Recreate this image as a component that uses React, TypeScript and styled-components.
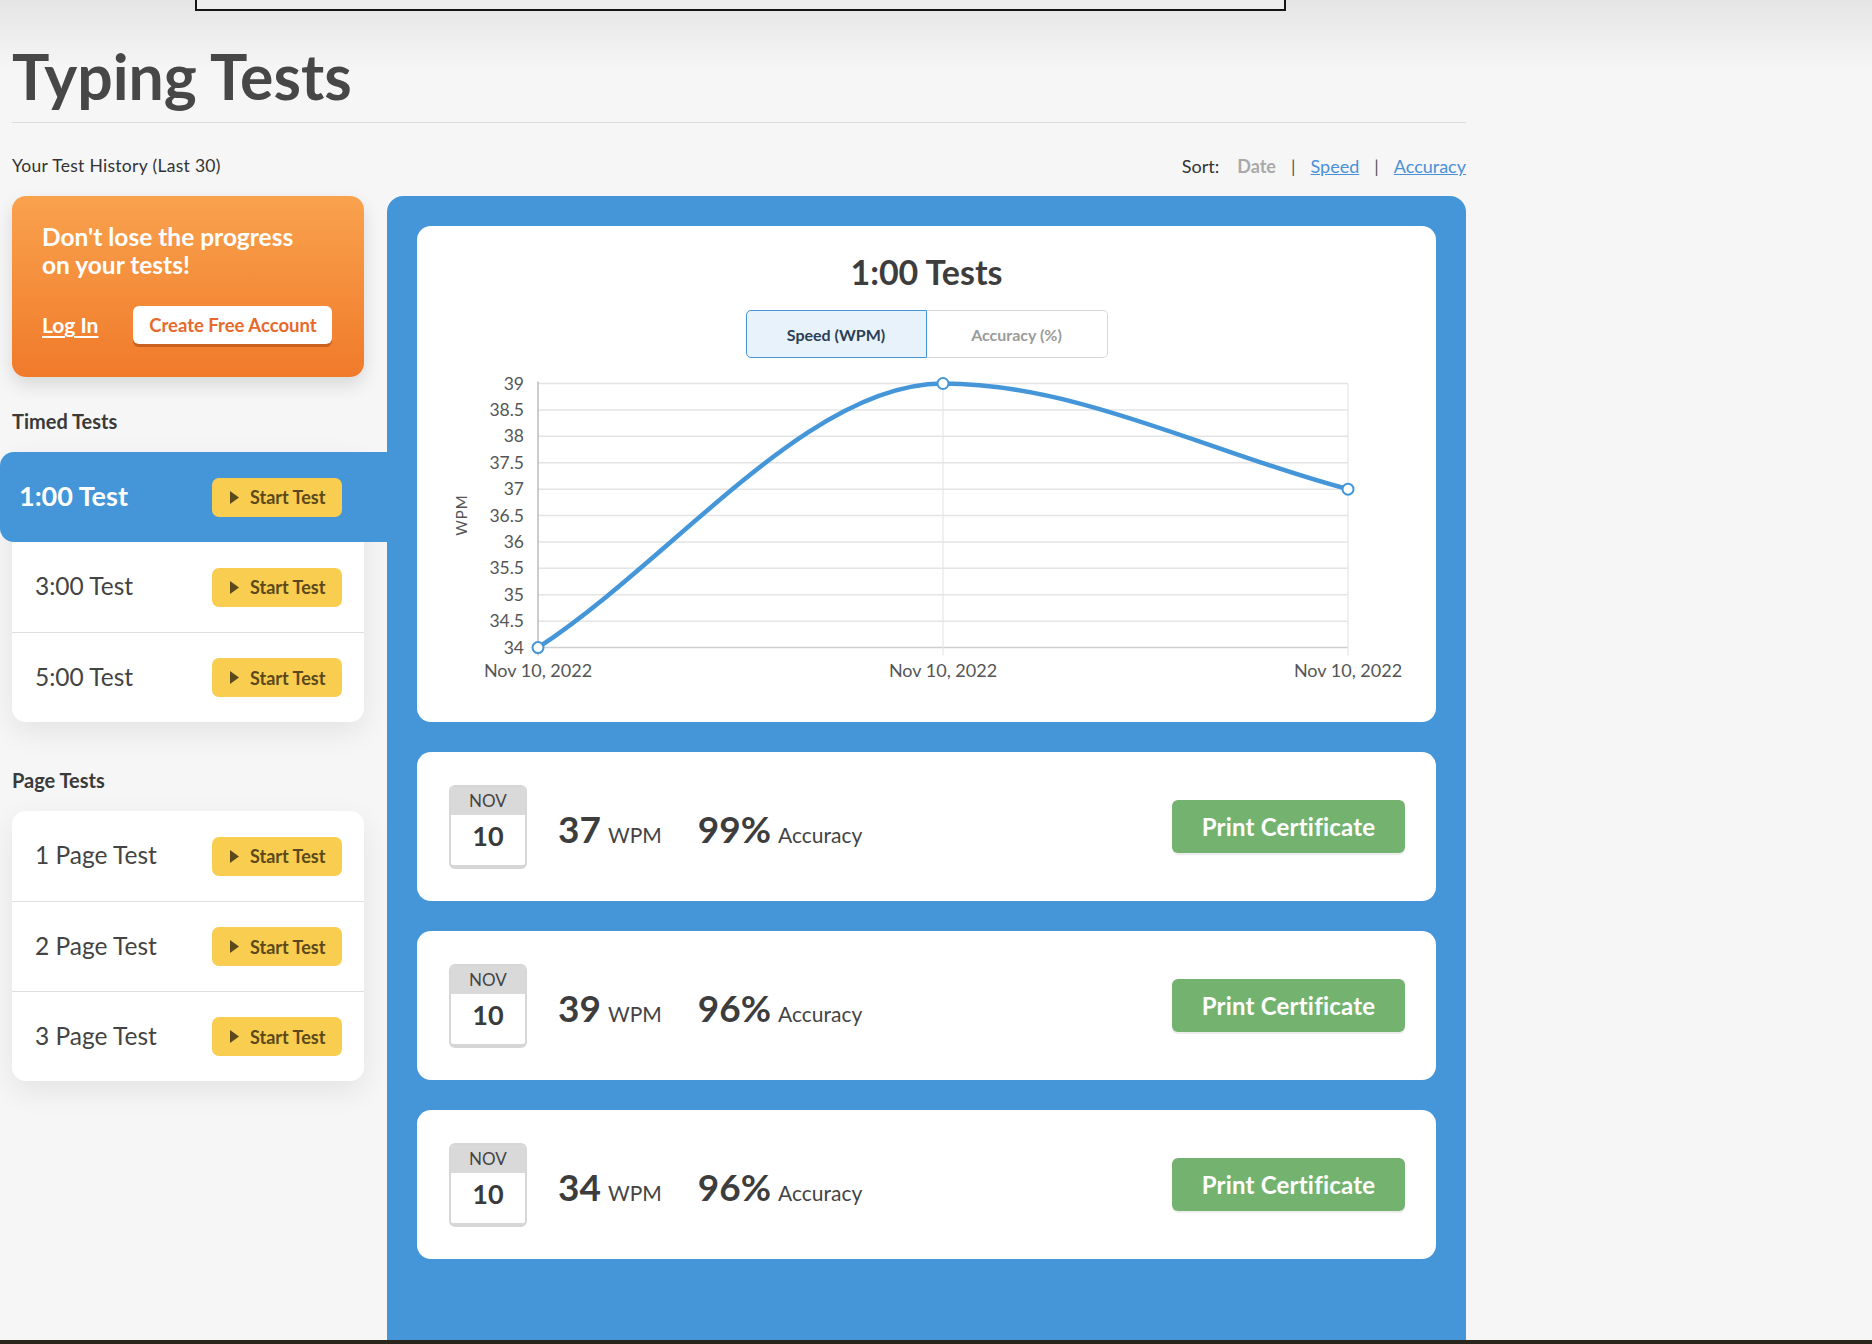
import React from "react";
import styled, { createGlobalStyle } from "styled-components";

const GlobalStyle = createGlobalStyle`
  html, body { margin: 0; padding: 0; overflow: hidden; }
  body {
    background: #f6f6f6 linear-gradient(#e5e5e5 0px, #f6f6f6 70px) no-repeat;
    font-family: Lato, "Open Sans", sans-serif;
    color: #444;
  }
  * { box-sizing: border-box; }
`;

const Page = styled.div`
  width: 1872px;
  height: 1344px;
  display: flex;
  flex-direction: column;
`;

const TopFrame = styled.div`
  margin-left: 195px;
  width: 1091px;
  height: 11px;
  border: 2px solid #151515;
  border-top: none;
  background: #eeeeee;
  flex: none;
`;

const Main = styled.main`
  width: 1466px;
  padding-left: 12px;
  flex: 1;
`;

const Title = styled.h1`
  margin: 29px 0 0;
  font: 700 62.5px/72px Lato, sans-serif;
  color: #474747;
  padding-bottom: 10px;
  border-bottom: 1px solid #dcdcdc;
`;

const SubHeader = styled.div`
  margin-top: 33px;
  height: 20px;
  display: flex;
  justify-content: space-between;
  align-items: center;
  font: 400 17.5px/20px Lato, sans-serif;
  letter-spacing: 0.3px;
  color: #333;
`;

const Sort = styled.div`
  display: flex;
  align-items: center;
  font-size: 18px;
  letter-spacing: 0;
  color: #333;
`;

const SortItem = styled.span<{ $link?: boolean; $muted?: boolean }>`
  margin-left: ${(p) => (p.$muted ? "18px" : "0")};
  color: ${(p) => (p.$link ? "#4a90d9" : p.$muted ? "#a9a9a9" : "#333")};
  text-decoration: ${(p) => (p.$link ? "underline" : "none")};
  font-weight: ${(p) => (p.$muted ? 700 : 400)};
`;

const Pipe = styled.span`
  margin: 0 15px;
  color: #555;
`;

const Content = styled.div`
  margin-top: 20px;
  display: grid;
  grid-template-columns: 352px 1079px;
  column-gap: 23px;
  align-items: start;
`;

const LeftCol = styled.aside`
  display: flex;
  flex-direction: column;
`;

const Promo = styled.div`
  height: 181px;
  border-radius: 14px;
  background: linear-gradient(#f9a24e, #f07a2a);
  box-shadow: 0 8px 18px rgba(0, 0, 0, 0.12);
  padding: 27px 30px 0;
  color: #fff;
`;

const PromoTitle = styled.div`
  font: 700 24.5px/28px Lato, sans-serif;
`;

const PromoActions = styled.div`
  margin-top: 27px;
  display: flex;
  align-items: center;
  gap: 35px;
`;

const LoginLink = styled.a`
  font: 700 21px/24px Lato, sans-serif;
  color: #fff;
  text-decoration: underline;
  text-underline-offset: 3px;
`;

const CreateButton = styled.button`
  width: 199px;
  height: 38px;
  border: none;
  border-radius: 6px;
  background: #fff;
  color: #e56a2b;
  font: 700 18.5px Lato, sans-serif;
  padding: 0;
  box-shadow: 0 3px 0 #c9611f;
`;

const SectionLabel = styled.div<{ $top: number }>`
  margin: ${(p) => p.$top}px 0 19px;
  font: 700 20px/24px Lato, sans-serif;
  color: #3a3a3a;
`;

const TestCard = styled.div`
  background: #fff;
  border-radius: 14px;
  box-shadow: 0 10px 30px rgba(0, 0, 0, 0.08);
  display: flex;
  flex-direction: column;
`;

const TestRow = styled.div<{ $active?: boolean; $first?: boolean }>`
  height: 90px;
  display: flex;
  align-items: center;
  justify-content: space-between;
  padding: ${(p) => (p.$active ? "0 45px 0 19px" : "0 22px 0 23px")};
  margin: ${(p) => (p.$active ? "0 -23px 0 -12px" : "0")};
  background: ${(p) => (p.$active ? "#4496d9" : "transparent")};
  border-radius: ${(p) => (p.$active ? "14px 0 0 14px" : "0")};
  border-top: ${(p) => (p.$first || p.$active ? "none" : "1px solid #dedede")};
  color: ${(p) => (p.$active ? "#fff" : "#444")};
  font: ${(p) => (p.$active ? "700 27px" : "400 24.5px")} Lato, sans-serif;
`;

const RowLabel = styled.span`
  margin-top: -3px;
`;

const StartButton = styled.button`
  width: 130px;
  height: 39px;
  border: none;
  border-radius: 7px;
  background: #f9cd50;
  color: #5a4a1b;
  display: flex;
  align-items: center;
  gap: 11px;
  padding: 0 0 0 18px;
  font: 700 18px Lato, sans-serif;
`;

const RightPanel = styled.section`
  height: 1144px;
  background: #4496d9;
  border-radius: 16px 16px 0 0;
  padding: 30px;
  display: flex;
  flex-direction: column;
  gap: 30px;
`;

const ChartCard = styled.div`
  height: 496px;
  background: #fff;
  border-radius: 14px;
  padding-top: 26px;
  display: flex;
  flex-direction: column;
  align-items: center;
  flex: none;
`;

const ChartTitle = styled.h2`
  margin: 0;
  font: 700 34px/40px Lato, sans-serif;
  color: #3d3d3d;
`;

const Tabs = styled.div`
  margin-top: 18px;
  display: flex;
`;

const Tab = styled.div<{ $active?: boolean }>`
  width: 181px;
  height: 48px;
  display: flex;
  align-items: center;
  justify-content: center;
  font: 700 16px Lato, sans-serif;
  background: ${(p) => (p.$active ? "#e8f2fb" : "#fff")};
  color: ${(p) => (p.$active ? "#2d3e55" : "#9b9b9b")};
  border: 1px solid ${(p) => (p.$active ? "#4496d9" : "#d8d8d8")};
  border-left-width: ${(p) => (p.$active ? "1px" : "0")};
  border-radius: ${(p) => (p.$active ? "5px 0 0 5px" : "0 5px 5px 0")};
`;

const ChartSvg = styled.svg`
  display: block;
  margin-top: 12px;
  width: 1020px;
  height: 330px;
  align-self: flex-start;
  font-family: Lato, sans-serif;
`;

const ResultCard = styled.div`
  height: 149px;
  flex: none;
  background: #fff;
  border-radius: 14px;
  padding: 0 31px 0 32px;
  display: flex;
  align-items: center;
`;

const DateBox = styled.div`
  width: 78px;
  height: 84px;
  border: 2px solid #d6d6d6;
  border-bottom-width: 4px;
  border-radius: 6px;
  overflow: hidden;
  display: flex;
  flex-direction: column;
`;

const DateMonth = styled.div`
  height: 28px;
  background: #d9d9d9;
  display: flex;
  align-items: center;
  justify-content: center;
  font: 400 17px Lato, sans-serif;
  color: #444;
`;

const DateDay = styled.div`
  flex: 1;
  background: #fff;
  display: flex;
  align-items: center;
  justify-content: center;
  padding-bottom: 8px;
  font: 700 27px Lato, sans-serif;
  color: #3a3a3a;
`;

const Stat = styled.div<{ $gap: number }>`
  margin-left: ${(p) => p.$gap}px;
  display: flex;
  align-items: baseline;
  gap: 7px;
  margin-top: 4px;
`;

const StatValue = styled.span`
  font: 700 37px Lato, sans-serif;
  color: #3d3d3d;
`;

const StatUnit = styled.span`
  font: 400 21px Lato, sans-serif;
  color: #444;
`;

const PrintButton = styled.button`
  margin-left: auto;
  width: 233px;
  height: 53px;
  border: none;
  border-radius: 6px;
  background: #73b36f;
  color: #fff;
  padding: 0;
  font: 700 24px Lato, sans-serif;
  letter-spacing: 0.2px;
  box-shadow: 0 2px 0 rgba(0, 0, 0, 0.07);
`;

const Footer = styled.footer`
  height: 4px;
  flex: none;
  background: #2a251c;
`;

const Play = () => (
  <svg width="9" height="13" viewBox="0 0 9 13">
    <path d="M0 0 L9 6.5 L0 13 Z" fill="#5a4a1b" />
  </svg>
);

const timed = ["1:00 Test", "3:00 Test", "5:00 Test"];
const pages = ["1 Page Test", "2 Page Test", "3 Page Test"];
const results = [
  { wpm: 37, acc: 99 },
  { wpm: 39, acc: 96 },
  { wpm: 34, acc: 96 },
];

const X_L = 121;
const X_M = 526;
const X_R = 931;
const Y_TOP = 13.5;
const STEP = 26.41;
const yLabels = ["39", "38.5", "38", "37.5", "37", "36.5", "36", "35.5", "35", "34.5", "34"];
const Y_BOT = Y_TOP + STEP * 10;
const yOf = (v: number) => Y_TOP + (39 - v) * 2 * STEP;

const Chart = () => {
  const p0 = { x: X_L, y: yOf(34) };
  const p1 = { x: X_M, y: yOf(39) };
  const p2 = { x: X_R, y: yOf(37) };
  const m0 = (p1.y - p0.y) / 405;
  const m2 = (p2.y - p1.y) / 405;
  const d = `M${p0.x},${p0.y} C${p0.x + 135},${p0.y + m0 * 135} ${p1.x - 135},${p1.y} ${p1.x},${p1.y} C${p1.x + 135},${p1.y} ${p2.x - 135},${p2.y - m2 * 135} ${p2.x},${p2.y}`;
  return (
    <ChartSvg viewBox="0 0 1020 330">
      {yLabels.map((l, i) => (
        <g key={l}>
          <line
            x1={X_L}
            x2={X_R}
            y1={Y_TOP + i * STEP}
            y2={Y_TOP + i * STEP}
            stroke={i === 10 ? "#cfcfcf" : "#e4e4e4"}
            strokeWidth={1.5}
          />
          <text x={107} y={Y_TOP + i * STEP + 6} textAnchor="end" fontSize={17.5} fill="#555">
            {l}
          </text>
        </g>
      ))}
      <line x1={X_L} x2={X_L} y1={Y_TOP - 2} y2={Y_BOT + 8} stroke="#bdbdbd" strokeWidth={1.5} />
      <line x1={X_M} x2={X_M} y1={Y_TOP} y2={Y_BOT + 8} stroke="#e6e6e6" strokeWidth={1.2} />
      <line x1={X_R} x2={X_R} y1={Y_TOP} y2={Y_BOT + 8} stroke="#e6e6e6" strokeWidth={1.2} />
      {[X_L, X_M, X_R].map((x) => (
        <text key={x} x={x} y={307} textAnchor="middle" fontSize={18} fill="#555">
          Nov 10, 2022
        </text>
      ))}
      <text
        x={0}
        y={0}
        transform="translate(50 145) rotate(-90)"
        textAnchor="middle"
        fontSize={15}
        fill="#555"
        letterSpacing={1}
      >
        WPM
      </text>
      <path d={d} fill="none" stroke="#4496d9" strokeWidth={4.5} strokeLinecap="round" />
      {[p0, p1, p2].map((p) => (
        <circle key={p.x} cx={p.x} cy={p.y} r={5.5} fill="#fff" stroke="#4496d9" strokeWidth={2} />
      ))}
    </ChartSvg>
  );
};

export default function App() {
  return (
    <>
      <GlobalStyle />
      <Page>
        <TopFrame />
        <Main>
          <Title>Typing Tests</Title>
          <SubHeader>
            <span>Your Test History (Last 30)</span>
            <Sort>
              <SortItem>Sort:</SortItem>
              <SortItem $muted>Date</SortItem>
              <Pipe>|</Pipe>
              <SortItem $link>Speed</SortItem>
              <Pipe>|</Pipe>
              <SortItem $link>Accuracy</SortItem>
            </Sort>
          </SubHeader>
          <Content>
            <LeftCol>
              <Promo>
                <PromoTitle>
                  Don't lose the progress
                  <br />
                  on your tests!
                </PromoTitle>
                <PromoActions>
                  <LoginLink>Log In</LoginLink>
                  <CreateButton>Create Free Account</CreateButton>
                </PromoActions>
              </Promo>
              <SectionLabel $top={32}>Timed Tests</SectionLabel>
              <TestCard>
                {timed.map((t, i) => (
                  <TestRow key={t} $active={i === 0} $first={i === 1}>
                    <RowLabel>{t}</RowLabel>
                    <StartButton>
                      <Play />
                      Start Test
                    </StartButton>
                  </TestRow>
                ))}
              </TestCard>
              <SectionLabel $top={46}>Page Tests</SectionLabel>
              <TestCard>
                {pages.map((t, i) => (
                  <TestRow key={t} $first={i === 0}>
                    <RowLabel>{t}</RowLabel>
                    <StartButton>
                      <Play />
                      Start Test
                    </StartButton>
                  </TestRow>
                ))}
              </TestCard>
            </LeftCol>
            <RightPanel>
              <ChartCard>
                <ChartTitle>1:00 Tests</ChartTitle>
                <Tabs>
                  <Tab $active>Speed (WPM)</Tab>
                  <Tab>Accuracy (%)</Tab>
                </Tabs>
                <Chart />
              </ChartCard>
              {results.map((r, i) => (
                <ResultCard key={i}>
                  <DateBox>
                    <DateMonth>NOV</DateMonth>
                    <DateDay>10</DateDay>
                  </DateBox>
                  <Stat $gap={31}>
                    <StatValue>{r.wpm}</StatValue>
                    <StatUnit>WPM</StatUnit>
                  </Stat>
                  <Stat $gap={36}>
                    <StatValue>{r.acc}%</StatValue>
                    <StatUnit>Accuracy</StatUnit>
                  </Stat>
                  <PrintButton>Print Certificate</PrintButton>
                </ResultCard>
              ))}
            </RightPanel>
          </Content>
        </Main>
        <Footer />
      </Page>
    </>
  );
}
